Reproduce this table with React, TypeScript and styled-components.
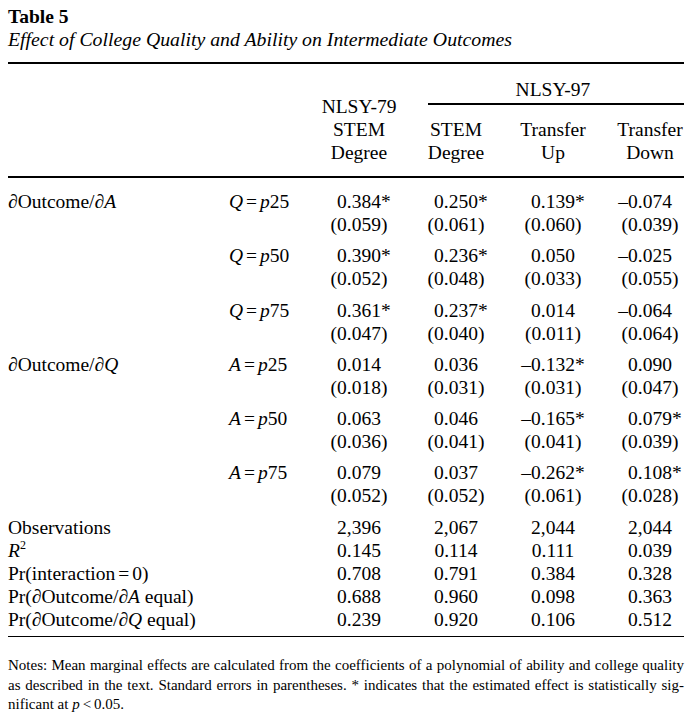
import React from "react";
import styled, { createGlobalStyle } from "styled-components";

const GlobalStyle = createGlobalStyle`
  html, body { margin: 0; padding: 0; background: #fff; }
  body { font-family: "Liberation Serif", "Times New Roman", serif; color: #000; }
`;

const Page = styled.div`
  width: 676px;
  padding: 5px 8px 0 8px;
  font-size: 19.5px;
  line-height: 23px;
`;

const Title = styled.div`
  font-weight: bold;
  font-size: 19.5px;
`;

const Subtitle = styled.div`
  font-style: italic;
  font-size: 19.8px;
`;

const Rule = styled.div<{ $w?: number; $mt?: number }>`
  height: ${(p) => p.$w ?? 2}px;
  background: #000;
  margin-top: ${(p) => p.$mt ?? 0}px;
`;

const Grid = styled.div`
  display: grid;
  grid-template-columns: 192px 67px repeat(4, 68px);
  column-gap: 29px;
  white-space: nowrap;
`;

const Header = styled(Grid)`
  padding: 14px 0 11.6px 0;
`;

const TopSpan = styled.div`
  grid-column: 4 / 7;
  grid-row: 1;
  display: flex;
  flex-direction: column;
  align-items: center;
`;

const SpanRule = styled.div`
  align-self: stretch;
  margin: 2px 0 0 6px;
  height: 2px;
  background: #000;
`;

const HeadCell = styled.div<{ $col: number; $rows?: string }>`
  grid-column: ${(p) => p.$col};
  grid-row: ${(p) => p.$rows ?? "2"};
  display: flex;
  flex-direction: column;
  align-items: center;
  justify-content: flex-end;
  padding-top: ${(p) => (p.$rows ? 0 : 13.4)}px;
`;

const Body = styled.div`
  padding-top: 12px;
`;

const Group = styled(Grid)`
  margin-bottom: 8.3px;
`;

const Stats = styled.div`
  margin-top: 1.2px;
`;

const StatRow = styled(Grid)``;

const Label = styled.div`
  grid-column: 1;
`;

const Sub = styled.div`
  grid-column: 2;
`;

const NumCell = styled.div`
  display: grid;
  grid-template-columns: 1fr auto 1fr;
`;

const Pre = styled.span`
  text-align: right;
`;

const Post = styled.span`
  text-align: left;
`;

const I = styled.i`
  font-style: italic;
`;

const Sup = styled.sup`
  font-size: 12px;
  vertical-align: 8px;
  line-height: 0;
`;

const Eq = styled.span`
  padding: 0 3px;
`;

const Notes = styled.div`
  margin-top: 19px;
  font-size: 15px;
  line-height: 19.8px;
`;

const NoteLine = styled.div<{ $last?: boolean }>`
  white-space: nowrap;
  text-align: ${(p) => (p.$last ? "left" : "justify")};
  text-align-last: ${(p) => (p.$last ? "left" : "justify")};
`;

function Num({ v }: { v: string }) {
  let pre = "";
  let post = "";
  let core = v;
  if (core.startsWith("(") || core.startsWith("–")) {
    pre = core[0];
    core = core.slice(1);
  }
  if (core.endsWith(")") || core.endsWith("*")) {
    post = core[core.length - 1];
    core = core.slice(0, -1);
  }
  return (
    <NumCell>
      <Pre>{pre}</Pre>
      <span>{core}</span>
      <Post>{post}</Post>
    </NumCell>
  );
}

const dA = (
  <>
    ∂Outcome/∂<I>A</I>
  </>
);
const dQ = (
  <>
    ∂Outcome/∂<I>Q</I>
  </>
);

const cond = (v: string, p: string) => (
  <>
    <I>{v}</I>
    <Eq>=</Eq>
    <I>p</I>
    {p}
  </>
);

const groups = [
  { label: dA, sub: cond("Q", "25"), est: ["0.384*", "0.250*", "0.139*", "–0.074"], se: ["(0.059)", "(0.061)", "(0.060)", "(0.039)"] },
  { label: null, sub: cond("Q", "50"), est: ["0.390*", "0.236*", "0.050", "–0.025"], se: ["(0.052)", "(0.048)", "(0.033)", "(0.055)"] },
  { label: null, sub: cond("Q", "75"), est: ["0.361*", "0.237*", "0.014", "–0.064"], se: ["(0.047)", "(0.040)", "(0.011)", "(0.064)"] },
  { label: dQ, sub: cond("A", "25"), est: ["0.014", "0.036", "–0.132*", "0.090"], se: ["(0.018)", "(0.031)", "(0.031)", "(0.047)"] },
  { label: null, sub: cond("A", "50"), est: ["0.063", "0.046", "–0.165*", "0.079*"], se: ["(0.036)", "(0.041)", "(0.041)", "(0.039)"] },
  { label: null, sub: cond("A", "75"), est: ["0.079", "0.037", "–0.262*", "0.108*"], se: ["(0.052)", "(0.052)", "(0.061)", "(0.028)"] },
];

const stats: { label: React.ReactNode; vals: string[] }[] = [
  { label: "Observations", vals: ["2,396", "2,067", "2,044", "2,044"] },
  { label: <><I>R</I><Sup>2</Sup></>, vals: ["0.145", "0.114", "0.111", "0.039"] },
  { label: <>Pr(interaction<Eq>=</Eq>0)</>, vals: ["0.708", "0.791", "0.384", "0.328"] },
  { label: <>Pr({dA} equal)</>, vals: ["0.688", "0.960", "0.098", "0.363"] },
  { label: <>Pr({dQ} equal)</>, vals: ["0.239", "0.920", "0.106", "0.512"] },
];

export default function App() {
  return (
    <>
      <GlobalStyle />
      <Page>
        <Title>Table 5</Title>
        <Subtitle>Effect of College Quality and Ability on Intermediate Outcomes</Subtitle>
        <Rule $mt={11} />
        <Header>
          <TopSpan>
            <div>NLSY-97</div>
            <SpanRule />
          </TopSpan>
          <HeadCell $col={3} $rows="1 / 3">
            <div>NLSY-79</div>
            <div>STEM</div>
            <div>Degree</div>
          </HeadCell>
          <HeadCell $col={4}>
            <div>STEM</div>
            <div>Degree</div>
          </HeadCell>
          <HeadCell $col={5}>
            <div>Transfer</div>
            <div>Up</div>
          </HeadCell>
          <HeadCell $col={6}>
            <div>Transfer</div>
            <div>Down</div>
          </HeadCell>
        </Header>
        <Rule />
        <Body>
          {groups.map((g, i) => (
            <Group key={i}>
              <Label>{g.label}</Label>
              <Sub>{g.sub}</Sub>
              {g.est.map((v, j) => (
                <Num key={"e" + j} v={v} />
              ))}
              <Label />
              <Sub />
              {g.se.map((v, j) => (
                <Num key={"s" + j} v={v} />
              ))}
            </Group>
          ))}
          <Stats>
            {stats.map((s, i) => (
              <StatRow key={i}>
                <Label>{s.label}</Label>
                <Sub />
                {s.vals.map((v, j) => (
                  <Num key={j} v={v} />
                ))}
              </StatRow>
            ))}
          </Stats>
        </Body>
        <Rule $w={1} $mt={5} />
        <Notes>
          <NoteLine>
            Notes: Mean marginal effects are calculated from the coefficients of a polynomial of ability and college quality
          </NoteLine>
          <NoteLine>
            as described in the text. Standard errors in parentheses. * indicates that the estimated effect is statistically sig-
          </NoteLine>
          <NoteLine $last>
            nificant at <I>p</I>
            <Eq>&lt;</Eq>0.05.
          </NoteLine>
        </Notes>
      </Page>
    </>
  );
}
